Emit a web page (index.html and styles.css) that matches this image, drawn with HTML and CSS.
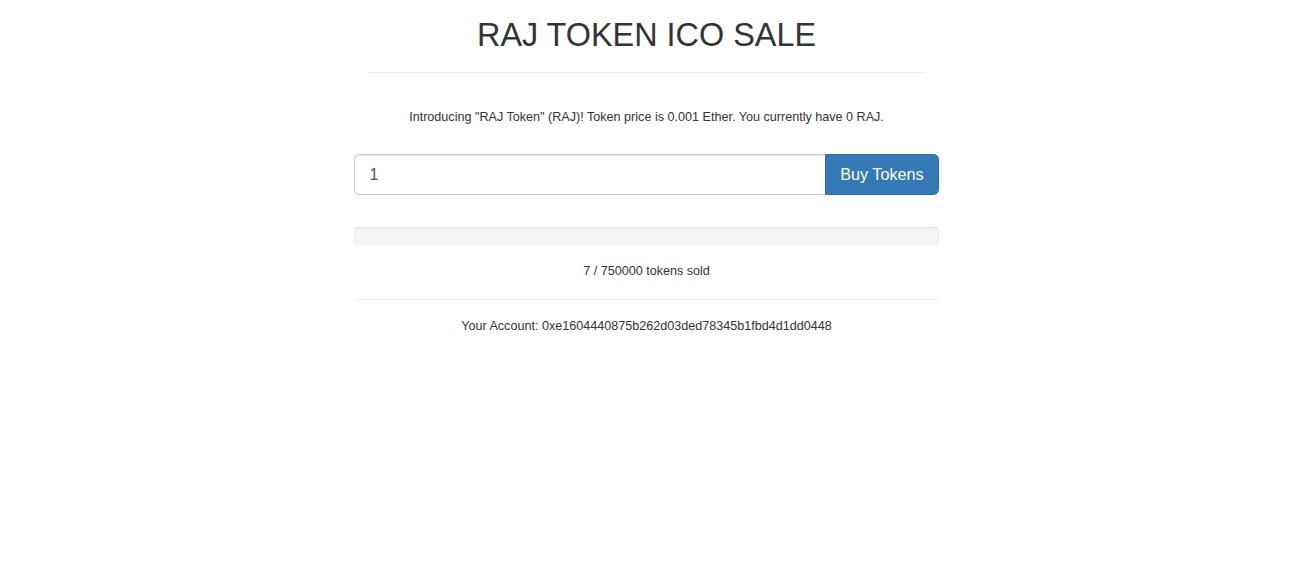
FILE: index.html
```html
<!DOCTYPE html>
<html lang="en">
<head>
<meta charset="utf-8">
<title>RAJ Token ICO Sale</title>
<link rel="stylesheet" href="styles.css">
</head>
<body>
<div class="container">
  <header class="header">
    <h1 class="title">RAJ TOKEN ICO SALE</h1>
    <hr class="rule">
  </header>
  <main class="content">
    <p class="intro">Introducing "RAJ Token" (RAJ)! Token price is 0.001 Ether. You currently have 0&nbsp;RAJ.</p>
    <form class="buy-form" onsubmit="return false;">
      <div class="input-group">
        <input class="amount" type="number" name="number" value="1" min="1">
        <button type="submit" class="buy-btn">Buy Tokens</button>
      </div>
    </form>
    <div class="progress"><div class="progress-bar" style="width: 0%"></div></div>
    <p class="sold">7 / 750000 tokens sold</p>
    <hr class="rule rule-full">
    <p class="account">Your Account: 0xe1604440875b262d03ded78345b1fbd4d1dd0448</p>
  </main>
</div>
</body>
</html>
```
FILE: styles.css
```css
* { box-sizing: border-box; }
html, body { margin: 0; padding: 0; background: #fff; }
body {
  font-family: "Liberation Sans", Arial, Helvetica, sans-serif;
  font-size: 12.6px;
  line-height: 18px;
  color: #333;
}
.container {
  width: 585px;
  margin: 0 0 0 calc(50% - 291.5px);
}
.header {
  padding: 18px 13.5px 36px;
  text-align: center;
}
.title {
  margin: 0;
  font-size: 32.4px;
  line-height: 1.1;
  font-weight: 500;
  color: #333;
}
.rule {
  margin: 18px 0 0;
  border: 0;
  border-top: 1px solid #eee;
  height: 0;
}
.rule-full { margin: 0 0 18px; }
.content { text-align: center; }
.intro, .sold, .account {
  line-height: 16px;
  padding-bottom: 2px;
}
.intro { margin: 0 0 27px; }
.buy-form { margin: 0 0 31.5px; }
.input-group {
  display: flex;
  height: 41.4px;
}
.amount {
  flex: 1;
  min-width: 0;
  height: 41.4px;
  padding: 9px 14.4px;
  font-family: inherit;
  font-size: 16.2px;
  line-height: 1.3333;
  color: #555;
  background: #fff;
  border: 1px solid #ccc;
  border-right: 0;
  border-radius: 5.4px 0 0 5.4px;
  box-shadow: inset 0 1px 1px rgba(0,0,0,.075);
  outline: none;
  -moz-appearance: textfield;
}
.amount::-webkit-inner-spin-button,
.amount::-webkit-outer-spin-button { -webkit-appearance: none; margin: 0; }
.buy-btn {
  flex: none;
  padding: 9px 14.4px;
  font-family: inherit;
  font-size: 16.2px;
  line-height: 1.3333;
  color: #fff;
  background: #337ab7;
  border: 1px solid #2e6da4;
  border-radius: 0 5.4px 5.4px 0;
  white-space: nowrap;
  cursor: pointer;
}
.progress {
  height: 18px;
  margin: 0 0 18px;
  overflow: hidden;
  background: #f5f5f5;
  border-radius: 3.6px;
  box-shadow: inset 0 1px 2px rgba(0,0,0,.1);
}
.progress-bar {
  height: 100%;
  background: #337ab7;
}
.sold { margin: 0 0 18px; }
.account { margin: 0 0 9px; }
```
